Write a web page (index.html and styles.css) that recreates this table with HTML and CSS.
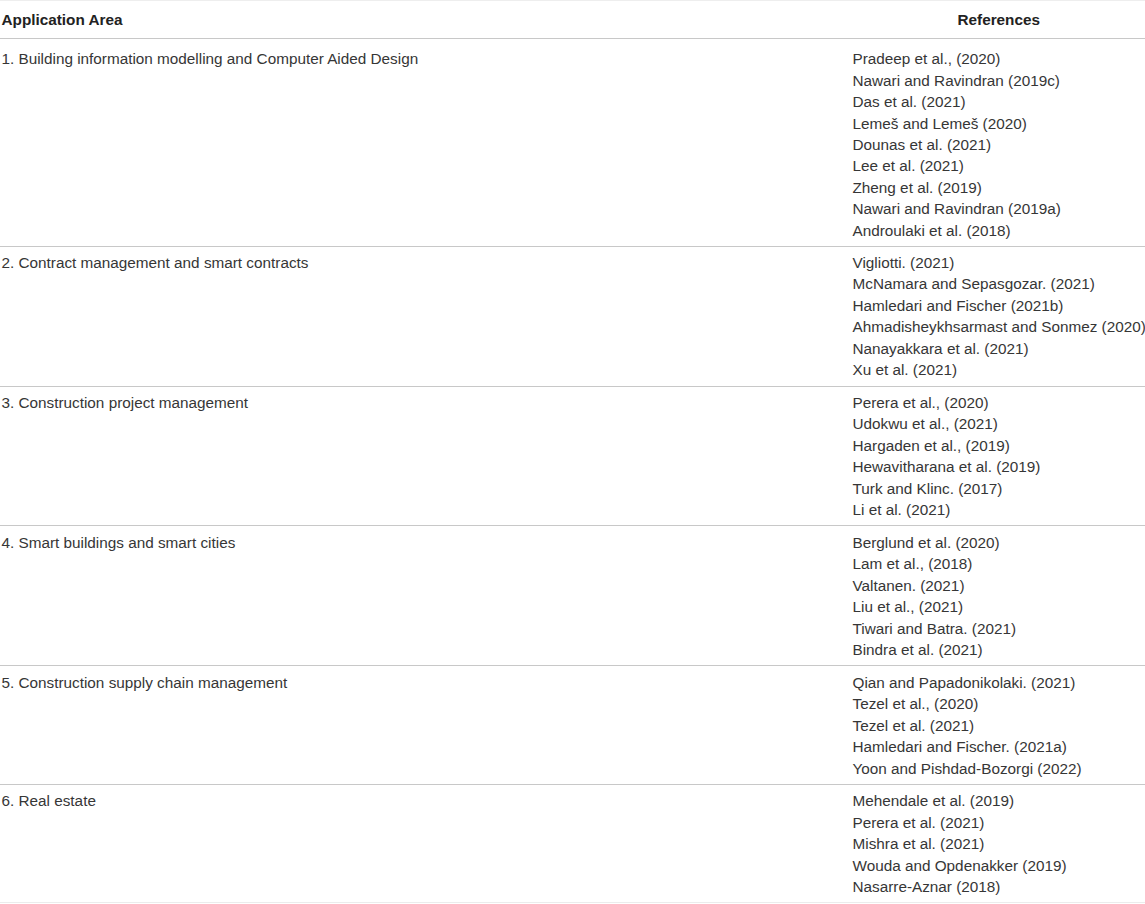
FILE: index.html
```html
<!DOCTYPE html>
<html lang="en">
<head>
<meta charset="utf-8">
<title>Application areas</title>
<link rel="stylesheet" href="styles.css">
</head>
<body>
<table class="ref-table">
  <thead>
    <tr>
      <th class="col-area">Application Area</th>
      <th class="col-refs">References</th>
    </tr>
  </thead>
  <tbody>
    <tr class="first-row">
      <td class="col-area">1. Building information modelling and Computer Aided Design</td>
      <td class="col-refs">
        <div class="ref">Pradeep et al., (2020)</div>
        <div class="ref">Nawari and Ravindran (2019c)</div>
        <div class="ref">Das et al. (2021)</div>
        <div class="ref">Lemeš and Lemeš (2020)</div>
        <div class="ref">Dounas et al. (2021)</div>
        <div class="ref">Lee et al. (2021)</div>
        <div class="ref">Zheng et al. (2019)</div>
        <div class="ref">Nawari and Ravindran (2019a)</div>
        <div class="ref">Androulaki et al. (2018)</div>
      </td>
    </tr>
    <tr>
      <td class="col-area">2. Contract management and smart contracts</td>
      <td class="col-refs">
        <div class="ref">Vigliotti. (2021)</div>
        <div class="ref">McNamara and Sepasgozar. (2021)</div>
        <div class="ref">Hamledari and Fischer (2021b)</div>
        <div class="ref">Ahmadisheykhsarmast and Sonmez (2020)</div>
        <div class="ref">Nanayakkara et al. (2021)</div>
        <div class="ref">Xu et al. (2021)</div>
      </td>
    </tr>
    <tr>
      <td class="col-area">3. Construction project management</td>
      <td class="col-refs">
        <div class="ref">Perera et al., (2020)</div>
        <div class="ref">Udokwu et al., (2021)</div>
        <div class="ref">Hargaden et al., (2019)</div>
        <div class="ref">Hewavitharana et al. (2019)</div>
        <div class="ref">Turk and Klinc. (2017)</div>
        <div class="ref">Li et al. (2021)</div>
      </td>
    </tr>
    <tr>
      <td class="col-area">4. Smart buildings and smart cities</td>
      <td class="col-refs">
        <div class="ref">Berglund et al. (2020)</div>
        <div class="ref">Lam et al., (2018)</div>
        <div class="ref">Valtanen. (2021)</div>
        <div class="ref">Liu et al., (2021)</div>
        <div class="ref">Tiwari and Batra. (2021)</div>
        <div class="ref">Bindra et al. (2021)</div>
      </td>
    </tr>
    <tr>
      <td class="col-area">5. Construction supply chain management</td>
      <td class="col-refs">
        <div class="ref">Qian and Papadonikolaki. (2021)</div>
        <div class="ref">Tezel et al., (2020)</div>
        <div class="ref">Tezel et al. (2021)</div>
        <div class="ref">Hamledari and Fischer. (2021a)</div>
        <div class="ref">Yoon and Pishdad-Bozorgi (2022)</div>
      </td>
    </tr>
    <tr>
      <td class="col-area">6. Real estate</td>
      <td class="col-refs">
        <div class="ref">Mehendale et al. (2019)</div>
        <div class="ref">Perera et al. (2021)</div>
        <div class="ref">Mishra et al. (2021)</div>
        <div class="ref">Wouda and Opdenakker (2019)</div>
        <div class="ref">Nasarre-Aznar (2018)</div>
      </td>
    </tr>
  </tbody>
</table>
</body>
</html>
```

FILE: styles.css
```css
html, body {
  margin: 0;
  padding: 0;
  background: #ffffff;
}

body {
  font-family: "Liberation Sans", Arial, Helvetica, sans-serif;
  font-size: 15.3px;
  line-height: 21.4px;
  color: #363636;
  overflow: hidden;
}

.ref-table {
  width: 1145px;
  border-collapse: collapse;
  table-layout: fixed;
  border-top: 1px solid #eeeeee;
}

.ref-table th {
  font-weight: bold;
  color: #222222;
  padding: 8px 0 8px 0;
  border-bottom: 1.5px solid #c8c8c8;
}

.ref-table td {
  vertical-align: top;
  padding: 5.5px 0 5px 0;
  border-bottom: 1.5px solid #c8c8c8;
}

.ref-table .first-row td {
  padding-top: 9px;
  padding-bottom: 4.5px;
}

.ref-table .col-area {
  width: 851px;
  text-align: left;
  padding-left: 1.5px;
}

.ref-table th.col-refs {
  text-align: center;
}

.ref-table td.col-refs {
  text-align: left;
  white-space: nowrap;
}

.ref-table tbody tr:last-child td {
  border-bottom-color: #ececec;
}
```
